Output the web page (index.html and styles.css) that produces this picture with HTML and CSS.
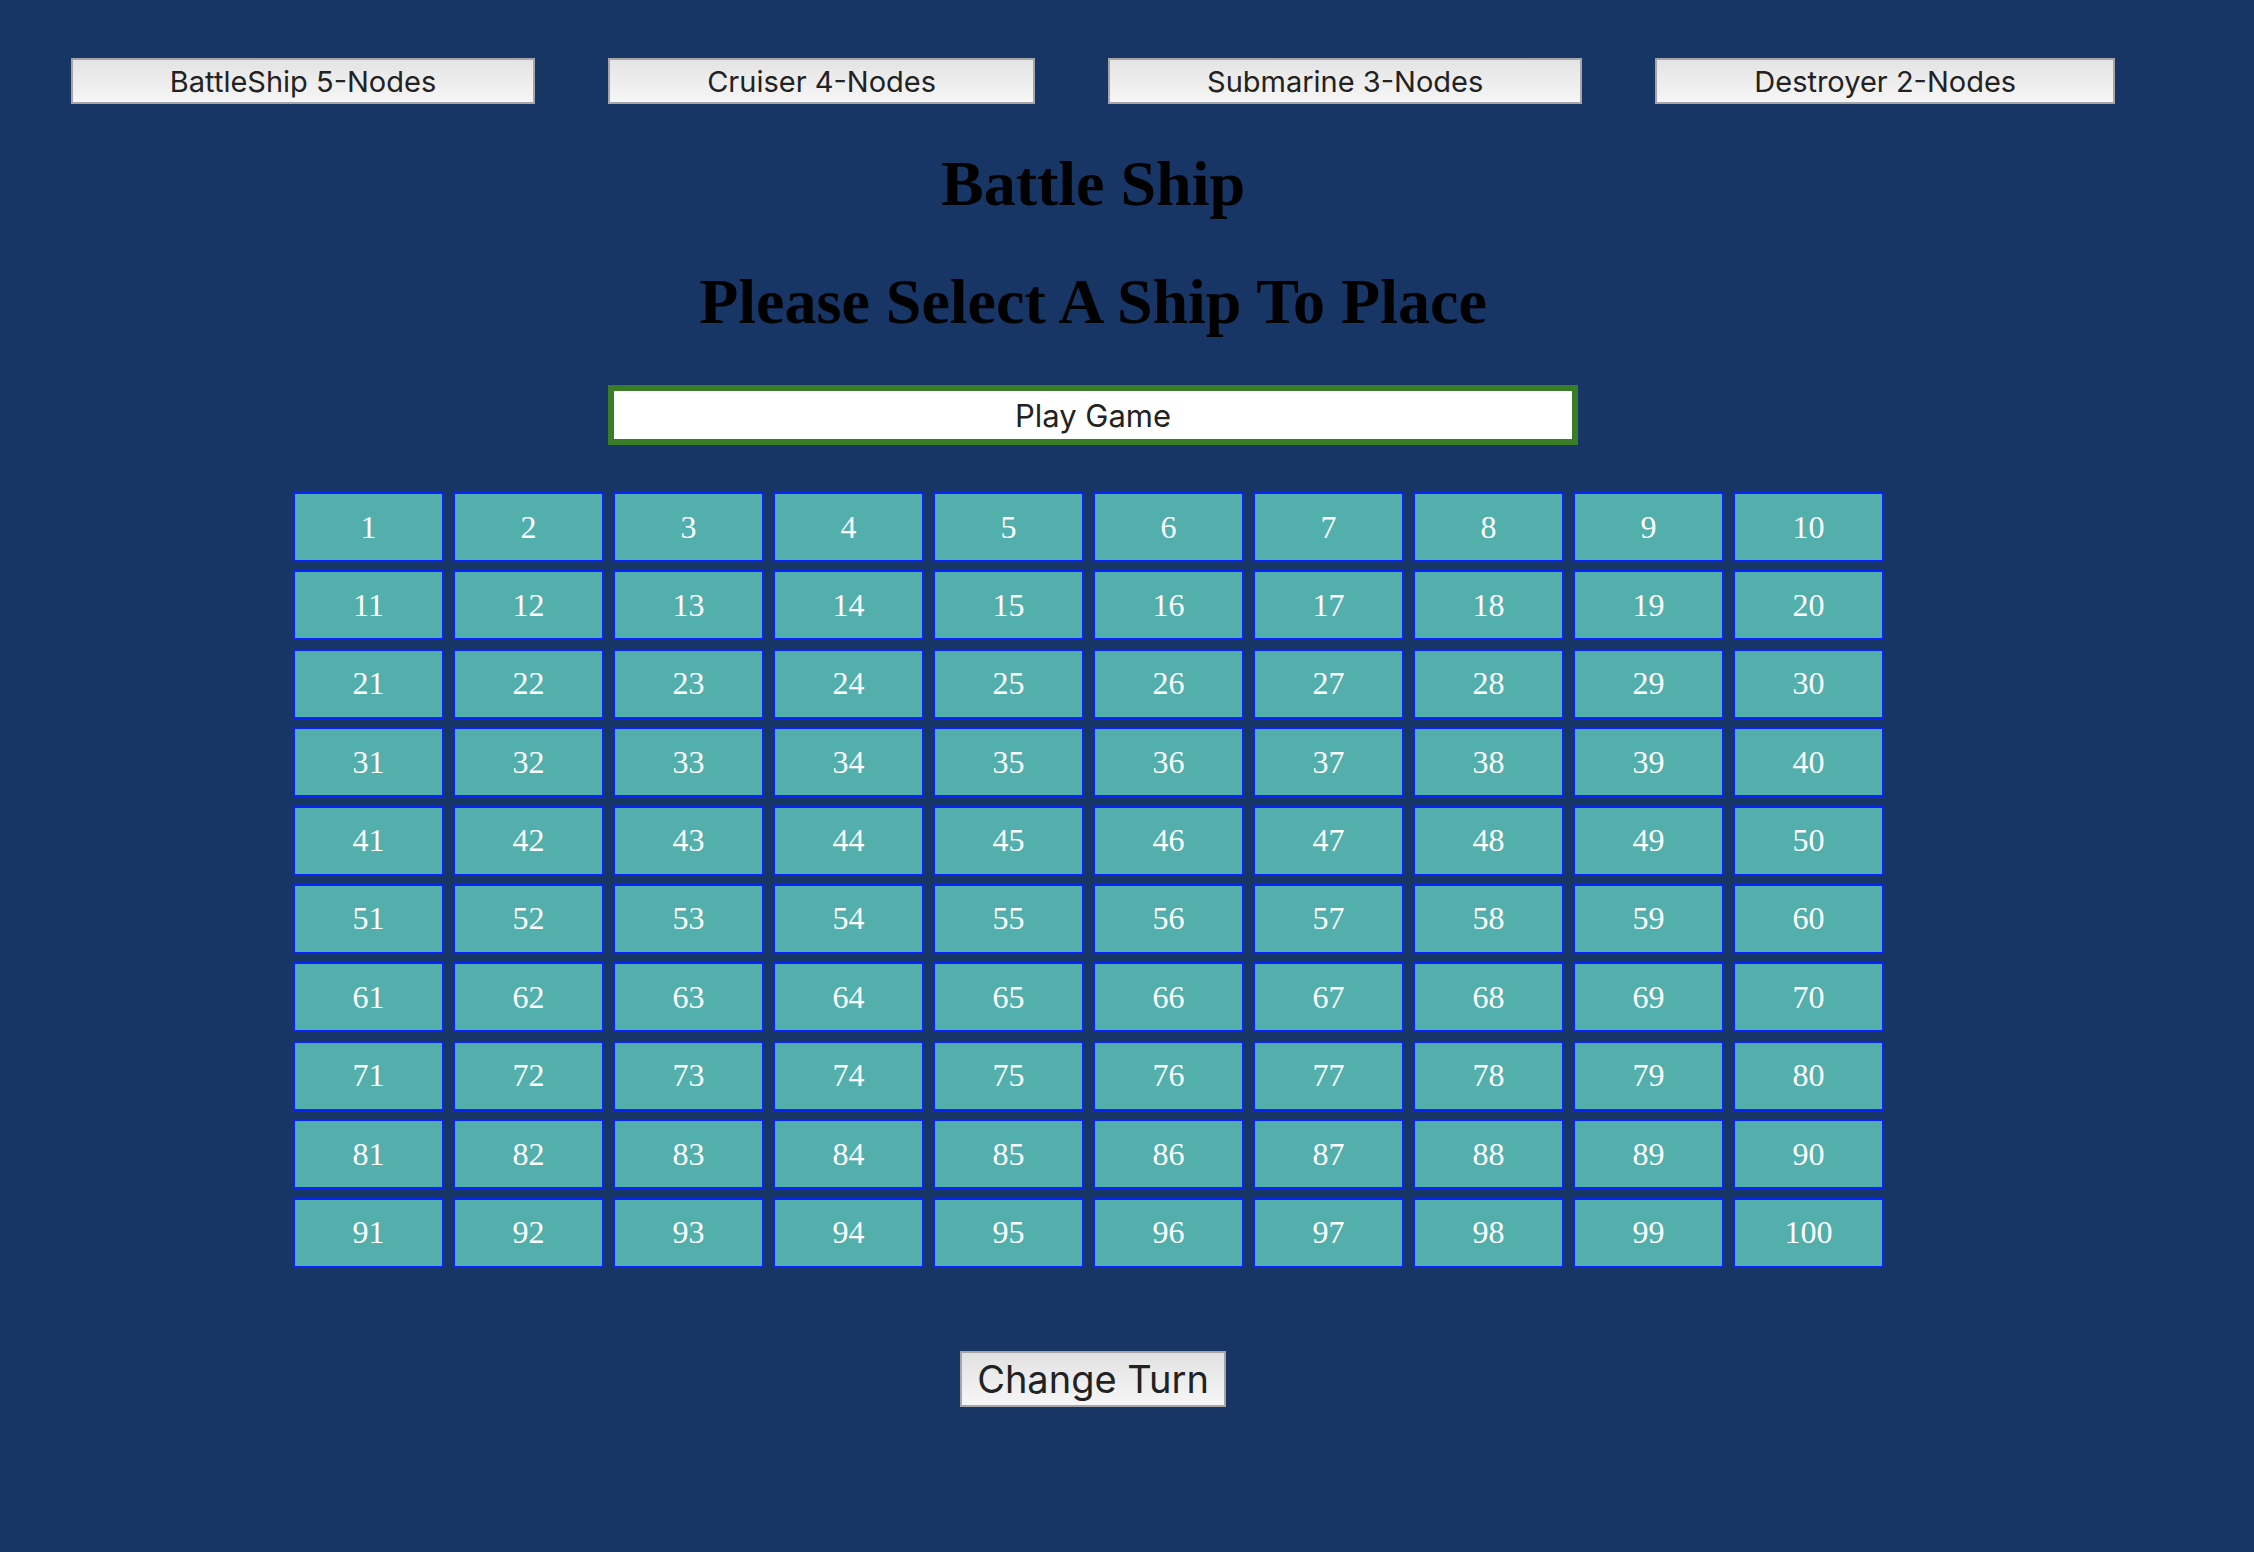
FILE: index.html
```html
<!DOCTYPE html>
<html lang="en">
<head>
<meta charset="utf-8">
<title>Battle Ship</title>
<link rel="stylesheet" href="styles.css">
</head>
<body>
<div class="page">
  <div class="ship-bar">
    <button class="ship-btn">BattleShip 5-Nodes</button>
    <button class="ship-btn">Cruiser 4-Nodes</button>
    <button class="ship-btn">Submarine 3-Nodes</button>
    <button class="ship-btn">Destroyer 2-Nodes</button>
  </div>
  <h1 class="title">Battle Ship</h1>
  <h1 class="title title-status">Please Select A Ship To Place</h1>
  <button class="play-btn">Play Game</button>
  <div class="board" id="board"></div>
  <button class="turn-btn">Change Turn</button>
</div>
<script src="app.js"></script>
</body>
</html>
```
FILE: styles.css
```css
html, body {
  margin: 0;
  padding: 0;
  background: #173565;
}
body {
  min-height: 1552px;
}
.page {
  width: 2186px;
  padding-top: 58px;
  display: flex;
  flex-direction: column;
  align-items: center;
}
.ship-bar {
  display: flex;
  gap: 73px;
}
.ship-btn {
  font-family: Inter, "Noto Sans", sans-serif;
  font-size: 29px;
  color: #222;
  height: 46px;
  padding: 0 97px;
  border: 2px solid #a6a6a6;
  background: linear-gradient(#e4e4e4, #f6f6f6);
  line-height: 1;
}
.title {
  font-family: "Liberation Serif", "Times New Roman", serif;
  font-weight: bold;
  font-size: 64px;
  line-height: 74px;
  color: #000;
  margin: 43px 0 0;
  text-align: center;
}
.title-status {
  margin-top: 44px;
}
.play-btn {
  margin-top: 46px;
  width: 970px;
  height: 60px;
  border: 6px solid #3a7d27;
  background: #fff;
  font-family: Inter, "Noto Sans", sans-serif;
  font-size: 31px;
  color: #222;
  padding: 0;
}
.board {
  margin-top: 47px;
  width: 1600px;
  display: grid;
  grid-template-columns: repeat(10, 151px);
  grid-auto-rows: 70px;
  column-gap: 9px;
  row-gap: 8.4px;
}
.cell {
  box-sizing: border-box;
  border: 2px solid #0a22ff;
  background: #53afab;
  color: #fff;
  font-family: "Liberation Serif", "Times New Roman", serif;
  font-size: 32px;
  display: flex;
  align-items: center;
  justify-content: center;
}
.turn-btn {
  margin-top: 83px;
  height: 56px;
  padding: 0 15px;
  border: 2px solid #a6a6a6;
  background: linear-gradient(#e2e2e2, #f6f6f6);
  font-family: Inter, "Noto Sans", sans-serif;
  font-size: 38px;
  color: #222;
  line-height: 1;
}
```
FILE: app.js
```js
const board = document.getElementById('board');
for (let i = 1; i <= 100; i++) {
  const d = document.createElement('div');
  d.className = 'cell';
  d.textContent = i;
  board.appendChild(d);
}
```
